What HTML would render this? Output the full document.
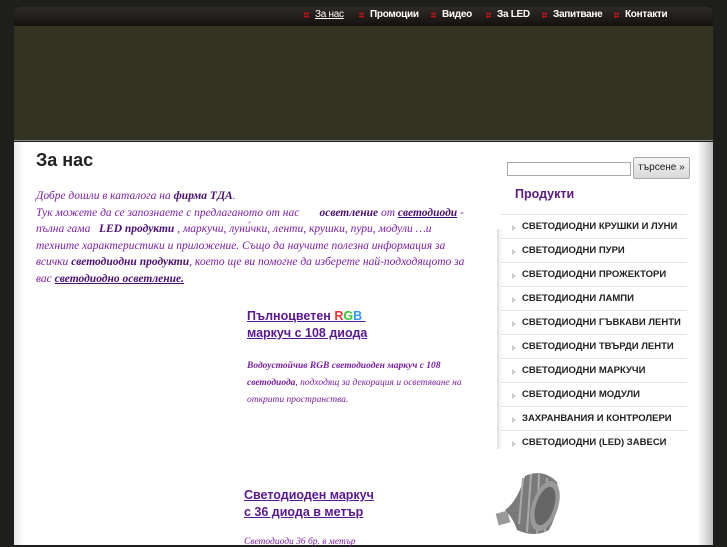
<!DOCTYPE html>
<html><head><meta charset="utf-8"><style>
*{margin:0;padding:0;box-sizing:border-box}
body{width:727px;height:545px;overflow:hidden;background:#1e1e1c;font-family:"Liberation Sans",sans-serif;position:relative}
.nav{position:absolute;left:14px;top:7px;width:699px;height:19px;background:linear-gradient(#2e2a28,#141210);border-radius:6px 6px 0 0}
.nav span{position:absolute;top:2px;font-size:10px;font-weight:bold;color:#fff;letter-spacing:-0.3px}
.nav i{display:inline-block;width:5px;height:6px;margin-right:6px;background:radial-gradient(circle,#c11 0 1px,transparent 1.3px) 0 0/2.5px 3px;vertical-align:-1px}
.hdr{position:absolute;left:14px;top:26px;width:699px;height:115px;background:#333322;border-bottom:1px solid #888}
.main{position:absolute;left:14px;top:142px;width:699px;height:403px;background:#fff}
.shadow{position:absolute;left:697px;top:142px;width:16px;height:403px;background:linear-gradient(90deg,#fff,#d8d8d8 60%,#bbb)}
.lshadow{position:absolute;left:14px;top:142px;width:10px;height:403px;background:linear-gradient(90deg,#e8e8e8,#fff)}
h1{position:absolute;left:36px;top:150px;font-size:18px;font-weight:bold;color:#222}
.intro{position:absolute;left:36px;top:188px;width:432px;font-family:"Liberation Serif",serif;font-style:italic;font-size:11.5px;line-height:16.6px;color:#7a1fa2}
.intro b,.intro a{color:#4a1070}
a{color:#5a1890}
.p1{position:absolute;left:247px;top:308px;font-size:12.5px;font-weight:bold;line-height:17px;color:#5a1890}
.p1 a{text-decoration:underline}
.d1{position:absolute;left:247px;top:358px;width:220px;font-family:"Liberation Serif",serif;font-style:italic;font-size:9.5px;line-height:17px;color:#7a1fa2}
.p2{position:absolute;left:244px;top:487px;font-size:12.5px;font-weight:bold;line-height:17px}
.p2 a{text-decoration:underline}
.d2{position:absolute;left:244px;top:537px;font-family:"Liberation Serif",serif;font-style:italic;font-size:9.5px;color:#7a1fa2}
.search{position:absolute;left:507px;top:162px;width:124px;height:14px;border:1px solid #aaa;background:#fff}
.btn{position:absolute;left:633px;top:157px;width:57px;height:22px;border:1px solid #aaa;border-radius:2px;background:linear-gradient(#f4f4f4,#d8d8d8);font-size:10px;color:#222;text-align:center;line-height:20px}
.ph{position:absolute;left:515px;top:187px;font-size:12.5px;font-weight:bold;color:#5a1a80}
.menu{position:absolute;left:501px;top:214px;width:186px}
.menu div{height:24px;border-top:1px solid #e4e4e4;font-size:9.5px;font-weight:bold;color:#222;line-height:24px;padding-left:21px;position:relative}
.menu div:before{content:"";position:absolute;left:11px;top:10px;border-left:4px solid #ccc;border-top:3px solid transparent;border-bottom:3px solid transparent}
.mshadow{position:absolute;left:497px;top:229px;width:5px;height:220px;background:linear-gradient(90deg,#ddd,#fff)}
</style></head><body>
<div class="nav">
<span style="left:290px"><i></i><u style="font-weight:normal">За нас</u></span>
<span style="left:345px"><i></i>Промоции</span>
<span style="left:417px"><i></i>Видео</span>
<span style="left:472px"><i></i>За LED</span>
<span style="left:528px"><i></i>Запитване</span>
<span style="left:600px"><i></i>Контакти</span>
</div>
<div class="hdr"></div>
<div class="main"></div>
<div class="lshadow"></div>
<div class="shadow"></div>
<h1>За нас</h1>
<div class="intro">Добре дошли в каталога на <b>фирма ТДА</b>.<br>Тук можете да се запознаете с предлаганото от нас &nbsp; &nbsp; &nbsp; <b>осветление</b> от <a href="#"><b>светодиоди</b></a> - пълна гама &nbsp; <b>LED продукти</b> , маркучи, луни́чки, ленти, крушки, пури, модули …и техните характеристики и приложение. Също да научите полезна информация за всички <b>светодиодни продукти</b>, което ще ви помогне да изберете най-подходящото за вас <a href="#"><b>светодиодно осветление.</b></a></div>
<div class="p1"><a>Пълноцветен <span style="color:#e33">R</span><span style="color:#3c3">G</span><span style="color:#39f">B</span>&nbsp;</a><br><a>маркуч с 108 диода</a></div>
<div class="d1"><b>Водоустойчив RGB светодиоден маркуч с 108 светодиода</b>, подходящ за декорация и осветяване на открити пространства.</div>
<div class="p2"><a>Светодиоден маркуч</a><br><a>с 36 диода в метър</a></div>
<div class="d2">Светодиоди 36 бр. в метър</div>
<div class="search"></div>
<div class="btn">търсене »</div>
<div class="ph">Продукти</div>
<div class="mshadow"></div>
<div class="menu">
<div>СВЕТОДИОДНИ КРУШКИ И ЛУНИ</div>
<div>СВЕТОДИОДНИ ПУРИ</div>
<div>СВЕТОДИОДНИ ПРОЖЕКТОРИ</div>
<div>СВЕТОДИОДНИ ЛАМПИ</div>
<div>СВЕТОДИОДНИ ГЪВКАВИ ЛЕНТИ</div>
<div>СВЕТОДИОДНИ ТВЪРДИ ЛЕНТИ</div>
<div>СВЕТОДИОДНИ МАРКУЧИ</div>
<div>СВЕТОДИОДНИ МОДУЛИ</div>
<div>ЗАХРАНВАНИЯ И КОНТРОЛЕРИ</div>
<div>СВЕТОДИОДНИ (LED) ЗАВЕСИ</div>
</div>
<svg style="position:absolute;left:495px;top:468px" width="70" height="72">
<rect x="2" y="44" width="12" height="12" fill="#999" transform="rotate(-15 8 50)"/>
<path d="M10 42 Q22 34 30 8 Q48 0 62 14 Q66 40 54 62 Q40 70 22 62 Q18 50 10 42Z" fill="#7a7a7a"/>
<path d="M28 10 L24 56 M36 6 L32 64 M44 6 L42 66 M52 10 L50 64" stroke="#aaa" stroke-width="2"/>
<ellipse cx="50" cy="38" rx="13" ry="26" fill="#999" transform="rotate(18 50 38)"/>
<ellipse cx="50" cy="38" rx="9" ry="20" fill="#666" transform="rotate(18 50 38)"/>
</svg>
</body></html>
